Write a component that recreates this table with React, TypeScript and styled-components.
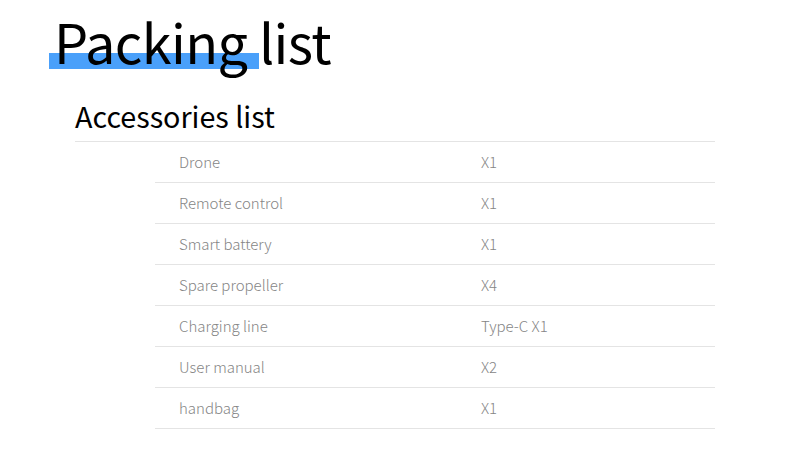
import React from 'react';
import styled, { createGlobalStyle } from 'styled-components';

const GlobalStyle = createGlobalStyle`
  body {
    margin: 0;
    background: #fff;
    font-family: "Noto Sans CJK SC", "Noto Sans", sans-serif;
  }
`;

const Page = styled.div`
  width: 790px;
  height: 469px;
  overflow: hidden;
  padding: 3px 75px 0 75px;
  box-sizing: border-box;
`;

const TitleWrap = styled.div`
  position: relative;
  margin-left: -21px;
  height: 76px;
`;

const Highlight = styled.div`
  position: absolute;
  left: -5px;
  top: 50px;
  width: 210px;
  height: 16px;
  background: #4aa0fa;
`;

const Title = styled.h1`
  position: relative;
  margin: 0;
  font-size: 54px;
  font-weight: 400;
  line-height: 76px;
  color: #000;
  letter-spacing: -0.6px;
`;

const SubTitle = styled.h2`
  margin: 16px 0 0 0;
  font-size: 28.7px;
  font-weight: 400;
  line-height: 42px;
  color: #000;
  padding-bottom: 4px;
  border-bottom: 1px solid #e4e4e4;
`;

const Table = styled.div`
  margin-left: 80px;
`;

const Row = styled.div`
  display: grid;
  grid-template-columns: 302px 1fr;
  height: 41px;
  align-items: center;
  border-bottom: 1px solid #e4e4e4;
  box-sizing: border-box;
  padding-left: 24px;
  padding-bottom: 1px;
  font-size: 15px;
  font-weight: 300;
  color: #858585;
`;

const items: [string, string][] = [
  ['Drone', 'X1'],
  ['Remote control', 'X1'],
  ['Smart battery', 'X1'],
  ['Spare propeller', 'X4'],
  ['Charging line', 'Type-C X1'],
  ['User manual', 'X2'],
  ['handbag', 'X1'],
];

export default function App() {
  return (
    <>
      <GlobalStyle />
      <Page>
        <TitleWrap>
          <Highlight />
          <Title>Packing list</Title>
        </TitleWrap>
        <SubTitle>Accessories list</SubTitle>
        <Table>
          {items.map(([name, qty]) => (
            <Row key={name}>
              <span>{name}</span>
              <span>{qty}</span>
            </Row>
          ))}
        </Table>
      </Page>
    </>
  );
}
